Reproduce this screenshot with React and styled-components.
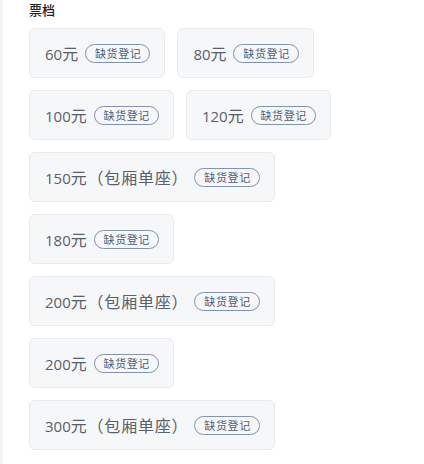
import styled, { createGlobalStyle } from 'styled-components';

const GlobalStyle = createGlobalStyle`
  body {
    margin: 0;
    background: #ffffff;
    font-family: "Open Sans", "Noto Sans CJK SC", sans-serif;
  }
`;

const Page = styled.div`
  border-left: 3px solid #f3f4f6;
  padding-left: 26px;
  min-height: 464px;
  box-sizing: border-box;
`;

const Title = styled.div`
  font-family: "Noto Sans CJK SC", sans-serif;
  font-size: 13px;
  line-height: 17px;
  padding-top: 1px;
  font-weight: 500;
  color: #222;
`;

const List = styled.div`
  display: flex;
  flex-wrap: wrap;
  gap: 12px;
  margin-top: 10px;
`;

const Card = styled.div`
  display: flex;
  align-items: center;
  gap: 6px;
  height: 50px;
  box-sizing: border-box;
  padding: 0 14px 0 15px;
  background: #f6f7f9;
  border: 1px solid #e9ebef;
  border-radius: 6px;
`;

const Price = styled.span`
  font-family: "Noto Sans CJK SC", sans-serif;
  font-size: 16px;
  color: #5b6068;
  letter-spacing: 0.8px;
`;

const Num = styled.span`
  font-family: "Open Sans", sans-serif;
  font-size: 15px;
  letter-spacing: 0;
`;

const Badge = styled.span`
  font-family: "Noto Sans CJK SC", sans-serif;
  font-size: 11px;
  line-height: 15px;
  color: #4d5c78;
  border: 1px solid #8393ab;
  border-radius: 10px;
  padding: 1px 8px 1px 9px;
  letter-spacing: 0.6px;
`;

const tiers = [
  ['60', '元'],
  ['80', '元'],
  ['100', '元'],
  ['120', '元'],
  ['150', '元（包厢单座）'],
  ['180', '元'],
  ['200', '元（包厢单座）'],
  ['200', '元'],
  ['300', '元（包厢单座）'],
];

const App = () => (
  <Page>
    <GlobalStyle />
    <Title>票档</Title>
    <List>
      {tiers.map(([num, rest], i) => (
        <Card key={i}>
          <Price>
            <Num>{num}</Num>
            {rest}
          </Price>
          <Badge>缺货登记</Badge>
        </Card>
      ))}
    </List>
  </Page>
);

export default App;
